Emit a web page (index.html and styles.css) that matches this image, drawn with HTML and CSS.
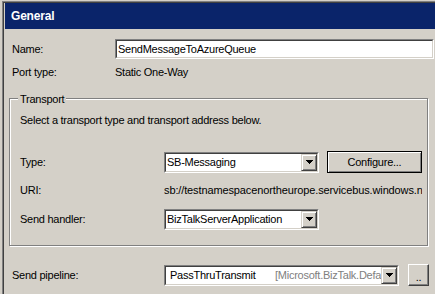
FILE: index.html
```html
<!DOCTYPE html>
<html>
<head>
<meta charset="utf-8">
<link rel="stylesheet" href="styles.css">
</head>
<body>
<div class="panel">
  <div class="panel-inner">
    <div class="header">General</div>
    <div class="content">
      <div class="row top-row">
        <div class="label label-main">Name:</div>
        <div class="sunken textbox"><div class="sunken-inner"><span class="field-text">SendMessageToAzureQueue</span></div></div>
      </div>
      <div class="row top-row port-row">
        <div class="label label-main">Port type:</div>
        <div class="value">Static One-Way</div>
      </div>

      <div class="group">
        <div class="legend">Transport</div>
        <div class="hint">Select a transport type and transport address below.</div>
        <div class="row group-row type-row">
          <div class="label label-group">Type:</div>
          <div class="sunken combo combo-short">
            <div class="sunken-inner">
              <span class="combo-text">SB-Messaging</span>
              <span class="combo-btn"><svg width="7" height="4" viewBox="0 0 7 4" shape-rendering="crispEdges"><rect x="0" y="0" width="7" height="1"/><rect x="1" y="1" width="5" height="1"/><rect x="2" y="2" width="3" height="1"/><rect x="3" y="3" width="1" height="1"/></svg></span>
            </div>
          </div>
          <div class="button default-button">Configure...</div>
        </div>
        <div class="row group-row uri-row">
          <div class="label label-group">URI:</div>
          <div class="uri-value">sb://testnamespacenortheurope.servicebus.windows.net/</div>
        </div>
        <div class="row group-row handler-row">
          <div class="label label-group">Send handler:</div>
          <div class="sunken combo combo-short">
            <div class="sunken-inner">
              <span class="combo-text">BizTalkServerApplication</span>
              <span class="combo-btn"><svg width="7" height="4" viewBox="0 0 7 4" shape-rendering="crispEdges"><rect x="0" y="0" width="7" height="1"/><rect x="1" y="1" width="5" height="1"/><rect x="2" y="2" width="3" height="1"/><rect x="3" y="3" width="1" height="1"/></svg></span>
            </div>
          </div>
        </div>
      </div>

      <div class="row top-row pipeline-row">
        <div class="label label-pipeline">Send pipeline:</div>
        <div class="sunken combo combo-long">
          <div class="sunken-inner">
            <span class="combo-text pipe-name">PassThruTransmit</span>
            <span class="combo-text pipe-assembly">[Microsoft.BizTalk.DefaultPipelines]</span>
            <span class="combo-btn"><svg width="7" height="4" viewBox="0 0 7 4" shape-rendering="crispEdges"><rect x="0" y="0" width="7" height="1"/><rect x="1" y="1" width="5" height="1"/><rect x="2" y="2" width="3" height="1"/><rect x="3" y="3" width="1" height="1"/></svg></span>
          </div>
        </div>
        <div class="button small-button">..</div>
      </div>
    </div>
  </div>
</div>
</body>
</html>
```

FILE: styles.css
```css
html, body {
  margin: 0;
  padding: 0;
}
body {
  width: 435px;
  height: 294px;
  overflow: hidden;
  background: #d4d0c8;
  font-family: "Liberation Sans", Arial, sans-serif;
  font-size: 11px;
  letter-spacing: -0.25px;
  color: #000;
}
.panel {
  margin: 1px 0 0 2px;
  border-top: 1px solid #808080;
  border-left: 1px solid #808080;
  height: 300px;
}
.panel-inner {
  border-top: 1px solid #404040;
  border-left: 1px solid #404040;
  padding-left: 1px;
  height: 100%;
}
.header {
  height: 26px;
  line-height: 26px;
  background: #0a246a;
  color: #fff;
  font-weight: bold;
  font-size: 12px;
  letter-spacing: -0.2px;
  padding-left: 6px;
}
.content {
  padding: 10px 0 0 4px;
}
.row {
  display: flex;
  align-items: center;
}
.top-row {
  padding-left: 3px;
  height: 20px;
}
.port-row {
  margin-top: 3px;
}
.label {
  flex: none;
  line-height: 14px;
}
.label-main {
  width: 103px;
}
.label-group {
  width: 144px;
}
.label-pipeline {
  width: 152px;
}
.value {
  line-height: 14px;
}

/* sunken 3D field */
.sunken {
  box-sizing: border-box;
  border: 1px solid;
  border-color: #808080 #fff #fff #808080;
  background: #fff;
}
.sunken-inner {
  box-sizing: border-box;
  height: 100%;
  display: flex;
  align-items: center;
  border: 1px solid;
  border-color: #404040 #d4d0c8 #d4d0c8 #404040;
  overflow: hidden;
}
.textbox {
  flex: 1;
  height: 20px;
  margin-right: 1px;
}
.field-text {
  padding-left: 1px;
  white-space: nowrap;
}

/* group box */
.group {
  margin-top: 16px;
  width: 419px;
  box-sizing: border-box;
  border: 1px solid #808080;
  box-shadow: inset 1px 1px 0 #fff, 1px 1px 0 #fff;
  padding: 0 0 15px 10px;
}
.legend {
  width: max-content;
  margin: -7px 0 0 -2px;
  padding: 0 2px;
  line-height: 14px;
  background: #d4d0c8;
}
.hint {
  margin-top: 7px;
  line-height: 14px;
}
.group-row {
  height: 22px;
}
.type-row {
  margin-top: 24px;
}
.uri-row {
  margin-top: 10px;
  height: 14px;
}
.handler-row {
  margin-top: 11px;
}
.uri-value {
  width: 258px;
  overflow: hidden;
  white-space: nowrap;
  line-height: 14px;
  letter-spacing: -0.12px;
}

/* combo box */
.combo {
  height: 21px;
  flex: none;
}
.combo-short {
  width: 155px;
}
.combo-long {
  width: 235px;
}
.combo-text {
  flex: 1;
  min-width: 0;
  padding-left: 1px;
  white-space: nowrap;
  overflow: hidden;
}
.pipe-name {
  flex: none;
  width: 105px;
  padding-left: 4px;
}
.pipe-assembly {
  color: #808080;
  padding-left: 0;
}
.combo-btn {
  flex: none;
  width: 16px;
  height: 100%;
  box-sizing: border-box;
  background: #d4d0c8;
  border: 1px solid;
  border-color: #d4d0c8 #404040 #404040 #d4d0c8;
  box-shadow: inset 1px 1px 0 #fff, inset -1px -1px 0 #808080;
  display: flex;
  align-items: center;
  justify-content: center;
}
.combo-btn svg {
  display: block;
  fill: #000;
}

/* buttons */
.button {
  box-sizing: border-box;
  background: #d4d0c8;
  display: flex;
  align-items: center;
  justify-content: center;
  flex: none;
}
.default-button {
  margin-left: 8px;
  width: 95px;
  height: 22px;
  border: 1px solid #000;
  box-shadow: inset 1px 1px 0 #fff, inset -1px -1px 0 #808080;
}
.pipeline-row {
  margin-top: 18px;
  height: 22px;
}
.small-button {
  margin-left: 9px;
  width: 21px;
  height: 22px;
  border: 1px solid;
  border-color: #fff #404040 #404040 #fff;
  box-shadow: inset -1px -1px 0 #808080;
  align-items: flex-end;
  padding-bottom: 2px;
  line-height: 12px;
}
```
